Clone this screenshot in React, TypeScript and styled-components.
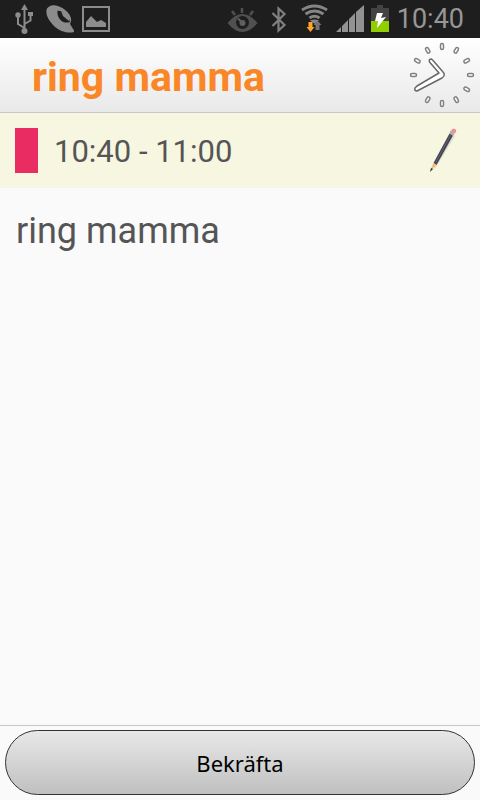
import React from "react";
import styled, { createGlobalStyle } from "styled-components";

const GlobalStyle = createGlobalStyle`
  *, *::before, *::after { box-sizing: border-box; }
  body { margin: 0; background: #fafafa; }
`;

const Screen = styled.div`
  display: flex;
  flex-direction: column;
  min-height: 100vh;
  font-family: Roboto, sans-serif;
  color: #555;
  background: #fafafa;
`;

const StatusBar = styled.div`
  display: flex;
  justify-content: space-between;
  height: 38px;
  padding: 0 16px 0 6px;
  background: #1e1e1e;
`;

const StatusGroup = styled.div`
  display: flex;
  align-items: center;
`;

const StatusIcon = styled.svg<{ $narrow?: boolean }>`
  display: block;
  width: ${(p) => (p.$narrow ? 22 : 36)}px;
  height: 38px;
`;

const Clock = styled.time`
  padding-left: 6px;
  font-size: 27px;
  line-height: 38px;
  color: #969696;
`;

const Header = styled.header`
  display: flex;
  align-items: center;
  justify-content: space-between;
  height: 75px;
  padding: 0 4px 0 32px;
  border-bottom: 1px solid #c8c8cc;
  background: linear-gradient(#fff, #e9e9e9);
`;

const Title = styled.h1`
  margin: 0;
  padding-top: 4px;
  font-size: 41px;
  line-height: 48px;
  font-weight: 700;
  color: #f98728;
`;

const ClockFace = styled.svg`
  display: block;
  width: 68px;
  height: 68px;
`;

const TimeRow = styled.section`
  display: flex;
  align-items: center;
  gap: 16px;
  height: 75px;
  padding: 0 15px;
  background: #f7f6e1;
`;

const ColorTag = styled.span`
  width: 23px;
  height: 45px;
  background: #e92c61;
`;

const TimeRange = styled.span`
  flex: 1;
  padding-top: 2px;
  font-size: 31px;
  line-height: 40px;
`;

const EditButton = styled.button`
  width: 44px;
  height: 52px;
  padding: 0;
  border: 0;
  background: none;
  cursor: pointer;
`;

const PencilIcon = styled.svg`
  display: block;
  width: 44px;
  height: 52px;
`;

const Details = styled.main`
  flex: 1;
  padding: 20px 16px;
`;

const Note = styled.p`
  margin: 0;
  font-size: 36px;
  line-height: 46px;
`;

const Footer = styled.footer`
  padding: 4px 5px 5px;
  border-top: 1px solid #c8c8c8;
`;

const ConfirmButton = styled.button`
  display: block;
  width: 100%;
  height: 65px;
  padding: 0;
  border: 1px solid #333;
  border-radius: 33px;
  background: linear-gradient(#e8e8e8, #c0c0c0);
  font-family: "Noto Sans", sans-serif;
  font-size: 22px;
  line-height: 30px;
  color: #000;
  cursor: pointer;
`;

const tickAngles = Array.from({ length: 12 }, (_, i) => i * 30).filter((a) => a !== 240);

export default function App() {
  return (
    <>
      <GlobalStyle />
      <Screen>
        <StatusBar>
          <StatusGroup>
            <StatusIcon viewBox="6 0 36 38" fill="none" stroke="#8c8c8c" strokeWidth="2" aria-label="USB">
              <path d="M24.5 31V8M24.5 28l-6.500-4v-8M24.500 24l6-3.500v-6" />
              <path d="M24.500 4l3.500 6h-7zM28 12h5v4h-5z" fill="#8c8c8c" stroke="none" />
              <circle cx="18" cy="15" r="2.700" fill="#8c8c8c" stroke="none" />
              <circle cx="24.500" cy="31" r="3" fill="#8c8c8c" stroke="none" />
            </StatusIcon>
            <StatusIcon viewBox="42 0 36 38" fill="#8c8c8c" aria-label="Call">
              <path d="M46.500 10C47.500 6 53 4 58 6c6 2 12 7 13 12.500 .5 2-.500 4-1 5.500l4 6.500c.500 1-.500 2-2 2-7 .500-13-2-17.500-6-5-5-9-11-8-16.500Z" />
              <path d="M57.500 11c4-1 11 4 12.500 11-3 1-6 1-9-1.500-3-3-4-6-3.500-9.500Z" fill="#1e1e1e" />
              <path d="M61 11l2 5 6.500 5.500-1-5-4-4z" />
            </StatusIcon>
            <StatusIcon viewBox="78 0 36 38" fill="#8c8c8c" aria-label="Screenshot">
              <rect x="83" y="7" width="26" height="24" fill="none" stroke="#8c8c8c" strokeWidth="2" />
              <path d="M86 27v-5l5-6 6 6 4-2 5 3v4z" />
            </StatusIcon>
          </StatusGroup>
          <StatusGroup>
            <StatusIcon viewBox="225 0 36 38" fill="none" stroke="#505050" strokeWidth="2.500" aria-label="Smart stay">
              <path d="M227.500 23q15-18 30 0-15 18-30 0Z" fill="#505050" stroke="none" />
              <path d="M242 8v5M232 11l3 4M253 11l-3 4" />
              <circle cx="242.500" cy="22.500" r="6.500" fill="#1e1e1e" stroke="none" />
              <circle cx="242.500" cy="23" r="3" fill="#606060" stroke="none" />
              <path d="M238 18.500l4 4" strokeWidth="2" stroke="#606060" />
            </StatusIcon>
            <StatusIcon viewBox="261 0 36 38" fill="none" stroke="#808080" strokeWidth="2.200" aria-label="Bluetooth">
              <path d="M272.500 13l12 12-6 5.500V8.500l6 5.500-12 12" />
            </StatusIcon>
            <StatusIcon viewBox="297 0 36 38" fill="none" stroke="#858585" strokeWidth="3" aria-label="Wi-Fi">
              <path d="M302 10q12.500-8 25 0M305.500 14q9-6 18 0M309.500 18q5-3.500 10 0" />
              <path d="M310 20.500q4.500-2 9 0l-4 3h-1z" fill="#858585" stroke="none" />
              <path d="M308.500 22h4v5h2l-4 5-4-5h2z" fill="#ffa32a" stroke="none" />
              <path d="M315.500 30v-5h-2l4-4.500 4 4.500h-2v5z" fill="#747474" stroke="none" />
            </StatusIcon>
            <StatusIcon viewBox="333 0 36 38" fill="#929292" aria-label="Signal">
              <path d="M336 32l5-5v5zM342 32v-6l6-6v12zM349 32V19l6-6v19zM356 32V12l8-7v27z" />
              <path d="M341.500 27v5M348.500 20v12M355.500 13v19" stroke="#1e1e1e" />
            </StatusIcon>
            <StatusIcon $narrow viewBox="369 0 22 38" aria-label="Battery charging">
              <path d="M371 8h6V5h6v3h6v13h-18z" fill="#434343" />
              <path d="M371 21h18v11h-18z" fill="#91cf00" />
              <path d="M377 13h6l-2 5 5-1-9 11 1-7h-3z" fill="#fff" />
            </StatusIcon>
            <Clock>10:40</Clock>
          </StatusGroup>
        </StatusBar>
        <Header>
          <Title>ring mamma</Title>
          <ClockFace viewBox="0 0 68 68" aria-hidden="true">
            <g fill="#fff" stroke="#808080" strokeWidth="1.500">
              {tickAngles.map((a) => (
                <rect key={a} x="32.500" y="2.500" width="3" height="6" rx="1.500" transform={`rotate(${a} 34 34)`} />
              ))}
            </g>
            <path
              d="M31 32L21.500 21q-1-3 2-3l2 2L35 31q3 3-1 6L9 50q-3 0-2-3l2-2Z"
              fill="#fff"
              stroke="#686868"
              strokeWidth="1.500"
              strokeLinejoin="round"
            />
          </ClockFace>
        </Header>
        <TimeRow>
          <ColorTag />
          <TimeRange>10:40 - 11:00</TimeRange>
          <EditButton type="button" aria-label="Edit">
            <PencilIcon viewBox="421 124 44 52">
              <path d="M432 170l22-36 1 1-19 31z" fill="#dcdbc9" />
              <path d="M433.500 162L449.500 132.500l3.500 2-16.500 29.500z" fill="#454452" />
              <path d="M435.500 162l15-28" stroke="#62626e" />
              <path d="M433.500 162l3 2-6.500 6z" fill="#edbc78" />
              <path d="M431 167l2 1-3 3z" fill="#333" />
              <path d="M449.500 132l1-2 4 2.500-1.500 2.500z" fill="#aaa" />
              <path d="M450.500 130.500q2-4 4.500-2.500t0 4.500z" fill="#ec9196" />
            </PencilIcon>
          </EditButton>
        </TimeRow>
        <Details>
          <Note>ring mamma</Note>
        </Details>
        <Footer>
          <ConfirmButton type="button">Bekräfta</ConfirmButton>
        </Footer>
      </Screen>
    </>
  );
}
